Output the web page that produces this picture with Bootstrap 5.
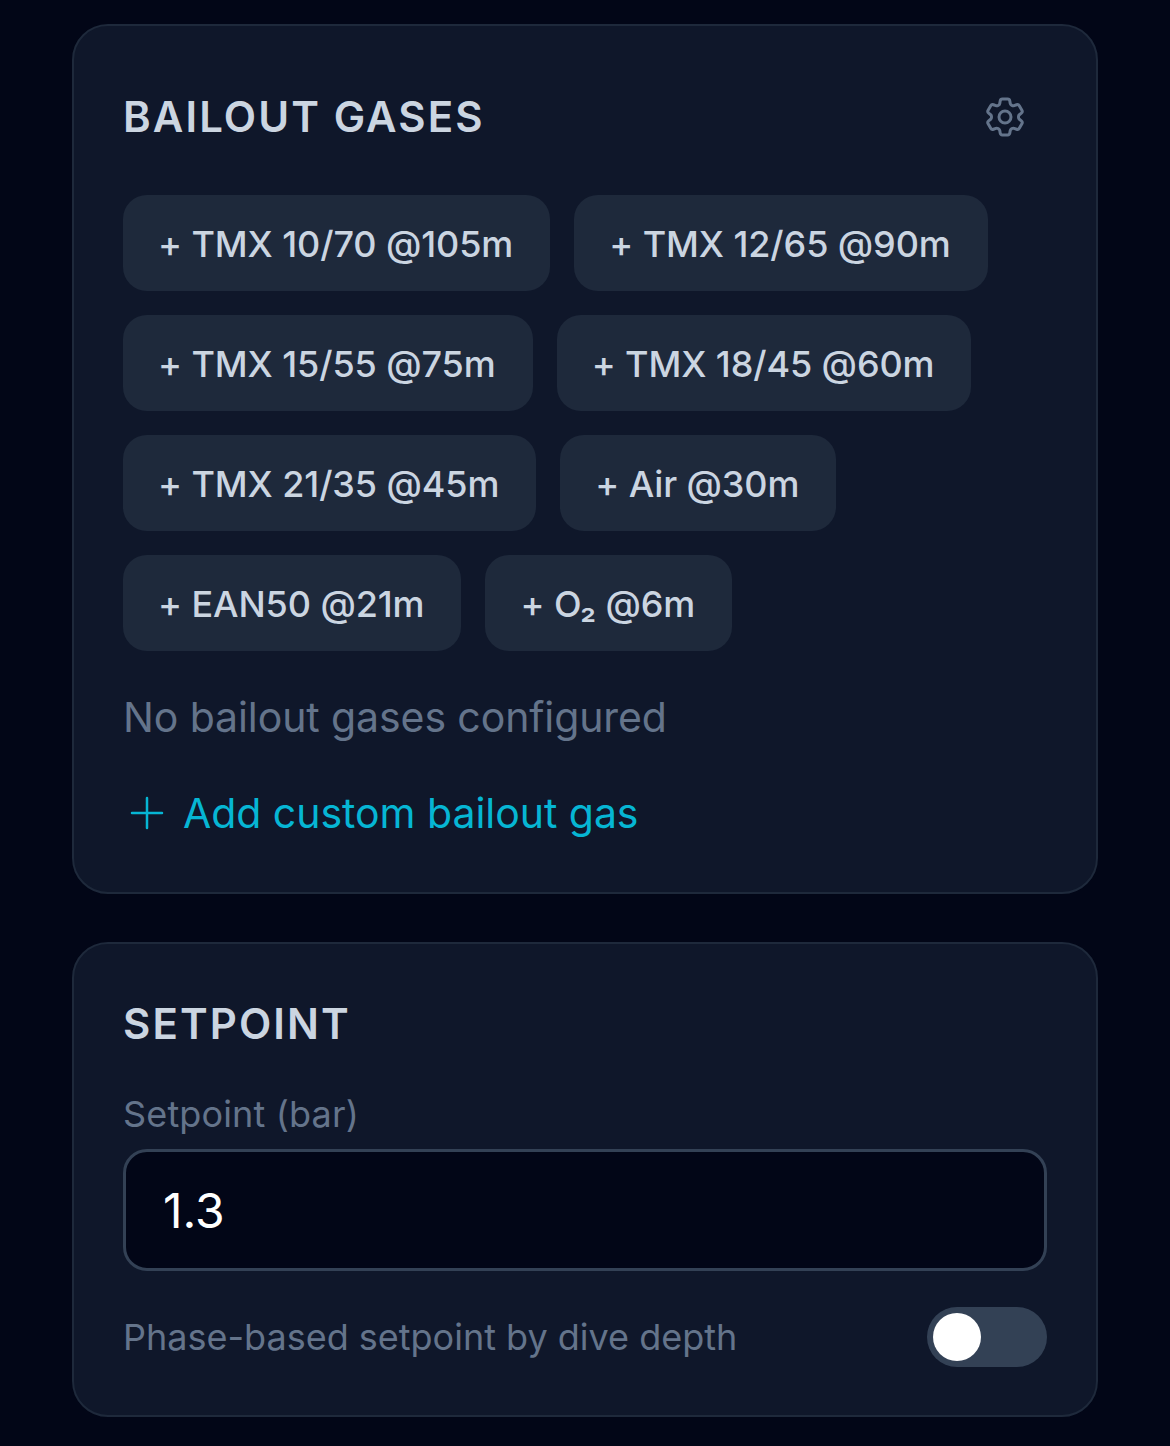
<!DOCTYPE html>
<html lang="en"><head><meta charset="utf-8">
<link href="https://cdn.jsdelivr.net/npm/bootstrap@5.3.0/dist/css/bootstrap.min.css" rel="stylesheet">
<style>
html,body{margin:0;background:#020617;font-family:Inter,"Liberation Sans",sans-serif;}
.page-wrap{padding:24px 72px 0;display:flex;flex-direction:column;gap:48px;}
.panel{background:#0f172a;border:2px solid #1e293b;border-radius:36px;padding:64px 49px 48px;}
.panel-a{height:870px;}
.panel-b{height:475px;padding-top:53px;}
.ptitle{font-size:42px;font-weight:600;letter-spacing:2.1px;color:#cbd5e1;line-height:54px;margin:0;text-transform:uppercase;}
.gear{width:48px;height:48px;color:#64748b;margin-right:18px;}
.chip{height:96px;padding:1px 37px 0 35px;border-radius:24px;background:#1e293b;color:#cbd5e1;font-size:36px;font-weight:500;letter-spacing:-.1px;line-height:54px;border:0;display:inline-flex;align-items:center;white-space:pre;}
.chips{margin-top:51px;gap:24px;}
.none{font-size:41px;letter-spacing:-.1px;color:#64748b;line-height:60px;margin-top:36px;}
.addl{font-size:41px;letter-spacing:-.04px;color:#06b6d4;line-height:60px;background:none;border:0;padding:0;margin-top:36px;gap:12px;}
.fl{font-size:36px;letter-spacing:.15px;color:#64748b;line-height:54px;margin:36px 0 8px;display:block;}
.finput{width:100%;height:122px;background:#020617;border:3px solid #334155;border-radius:24px;color:#fff;font-size:48px;padding:0 37px;font-family:inherit;display:block;outline:0;}
.togrow{margin-top:36px;}
.tog{width:120px;height:60px;border-radius:30px;background:#334155;padding:6px;flex:none;}
.knob{width:48px;height:48px;border-radius:50%;background:#fff;}
.tl{font-size:36px;color:#64748b;line-height:54px;}
</style></head><body>
<div class="page-wrap">
<section class="panel panel-a">
<div class="d-flex justify-content-between align-items-center"><h2 class="ptitle">Bailout Gases</h2>
<svg class="gear" viewBox="0 0 24 24" fill="none" stroke="currentColor" stroke-width="1.5" stroke-linecap="round" stroke-linejoin="round"><path d="M9.594 3.94c.09-.542.56-.94 1.11-.94h2.593c.55 0 1.02.398 1.11.94l.213 1.281c.063.374.313.686.645.87.074.04.147.083.22.127.325.196.72.257 1.075.124l1.217-.456a1.125 1.125 0 0 1 1.37.49l1.296 2.247a1.125 1.125 0 0 1-.26 1.431l-1.003.827c-.293.241-.438.613-.43.992a7.723 7.723 0 0 1 0 .255c-.008.378.137.75.43.991l1.004.827c.424.35.534.955.26 1.43l-1.298 2.247a1.125 1.125 0 0 1-1.369.491l-1.217-.456c-.355-.133-.75-.072-1.076.124a6.47 6.47 0 0 1-.22.128c-.331.183-.581.495-.644.869l-.213 1.281c-.09.543-.56.94-1.11.94h-2.594c-.55 0-1.019-.398-1.11-.94l-.213-1.281c-.062-.374-.312-.686-.644-.87a6.52 6.52 0 0 1-.22-.127c-.325-.196-.72-.257-1.076-.124l-1.217.456a1.125 1.125 0 0 1-1.369-.49l-1.297-2.247a1.125 1.125 0 0 1 .26-1.431l1.004-.827c.292-.24.437-.613.43-.991a6.932 6.932 0 0 1 0-.255c.007-.38-.138-.751-.43-.992l-1.004-.827a1.125 1.125 0 0 1-.26-1.43l1.297-2.247a1.125 1.125 0 0 1 1.37-.491l1.216.456c.356.133.751.072 1.076-.124.072-.044.146-.086.22-.128.332-.183.582-.495.644-.869l.214-1.28Z"/><path d="M15 12a3 3 0 1 1-6 0 3 3 0 0 1 6 0Z"/></svg></div>
<div class="d-flex flex-wrap chips">
<button class="chip">+ TMX 10/70 @105m</button><button class="chip">+ TMX 12/65 @90m</button>
<button class="chip">+ TMX 15/55 @75m</button><button class="chip">+ TMX 18/45 @60m</button>
<button class="chip">+ TMX 21/35 @45m</button><button class="chip">+ Air @30m</button>
<button class="chip">+ EAN50 @21m</button><button class="chip">+ O₂ @6m</button>
</div>
<div class="none">No bailout gases configured</div>
<button class="addl d-flex align-items-center"><svg width="48" height="48" viewBox="0 0 24 24" fill="none" stroke="currentColor" stroke-width="1.25" stroke-linecap="round"><path d="M12 4.5v15M4.5 12h15"/></svg>Add custom bailout gas</button>
</section>
<section class="panel panel-b">
<h2 class="ptitle">Setpoint</h2>
<label class="fl" for="sp">Setpoint (bar)</label>
<input id="sp" class="finput" value="1.3">
<div class="d-flex justify-content-between align-items-center togrow"><span class="tl">Phase-based setpoint by dive depth</span><div class="tog"><div class="knob"></div></div></div>
</section>
</div>
</body></html>
